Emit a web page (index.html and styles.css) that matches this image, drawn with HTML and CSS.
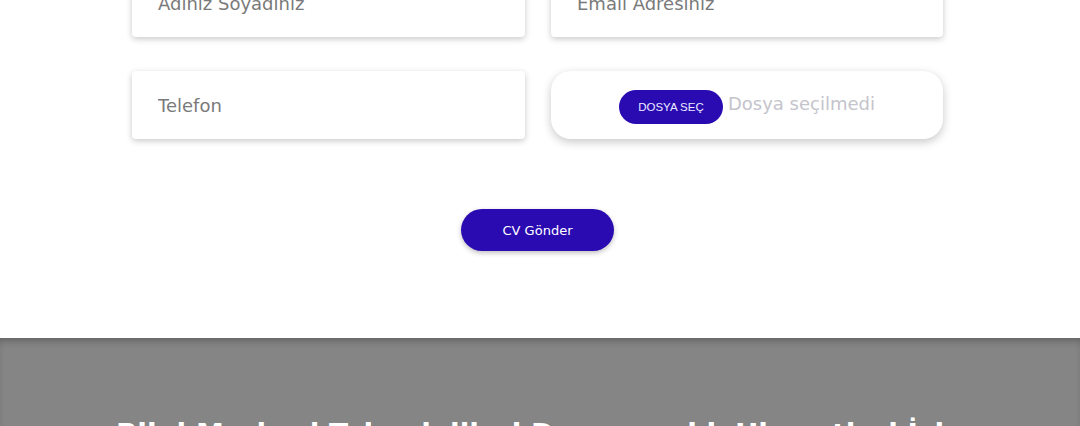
FILE: index.html
```html
<!DOCTYPE html>
<html lang="tr">
<head>
<meta charset="utf-8">
<title>CV Gönder</title>
<link rel="stylesheet" href="styles.css">
</head>
<body>
<section class="form-section">
  <form class="cv-form">
    <div class="grid">
      <input class="field" type="text" placeholder="Adiniz Soyadiniz">
      <input class="field" type="email" placeholder="Email Adresiniz">
      <input class="field" type="tel" placeholder="Telefon">
      <label class="file-field">
        <span class="file-btn">DOSYA SEÇ</span>
        <span class="file-name">Dosya seçilmedi</span>
      </label>
    </div>
    <div class="actions">
      <button type="button" class="submit">CV Gönder</button>
    </div>
  </form>
</section>
<section class="info-section">
  <h2 class="info-title">Bilgi Merkezi Teknolojileri Danışmanlık Hizmetleri İçin</h2>
</section>
</body>
</html>
```
FILE: styles.css
```css
* { box-sizing: border-box; }
html, body { margin: 0; padding: 0; background: #ffffff; overflow: hidden; }
body { font-family: "DejaVu Sans", "Noto Sans", sans-serif; }

.form-section {
  background: #ffffff;
  padding: 0 5px 87px 0;
}
.cv-form {
  width: 811px;
  margin: -31px auto 0;
}
.grid {
  display: grid;
  grid-template-columns: 393px 392px;
  column-gap: 26px;
  row-gap: 34px;
}
.field {
  height: 68px;
  border: none;
  border-radius: 4px;
  background: #fff;
  box-shadow: 0 2px 6px rgba(0,0,0,0.22);
  padding: 0 0 0 26px;
  font-family: "DejaVu Sans", sans-serif;
  font-size: 18px;
  color: #777;
  outline: none;
}
.field::placeholder { color: #7a7a7a; }
.file-field {
  height: 68px;
  border-radius: 20px;
  background: #fff;
  box-shadow: 0 3px 10px rgba(0,0,0,0.22);
  display: flex;
  align-items: center;
  justify-content: center;
  gap: 5px;
}
.file-btn {
  width: 104px;
  height: 34px;
  border-radius: 17px;
  background: #2a0bb1;
  color: #ecebff;
  font-family: "Liberation Sans", Arial, sans-serif;
  font-size: 11.5px;
  display: flex;
  align-items: center;
  justify-content: center;
  margin-top: 4px;
}
.file-name {
  font-size: 18px;
  color: #c4c4cc;
  margin-bottom: 3px;
}
.actions {
  display: flex;
  justify-content: center;
  margin-top: 70px;
}
.submit {
  width: 153px;
  height: 42px;
  border: none;
  border-radius: 21px;
  background: #2a0bb1;
  color: #fff;
  font-family: "DejaVu Sans", sans-serif;
  font-size: 13px;
  box-shadow: 0 2px 5px rgba(0,0,0,0.25);
}
.info-section {
  background: #858585;
  box-shadow: inset 0 6px 8px -4px rgba(0,0,0,0.3);
  height: 120px;
  padding-top: 80px;
  text-align: center;
}
.info-title {
  margin: 0;
  color: #fff;
  font-family: "DejaVu Sans", sans-serif;
  font-weight: bold;
  font-size: 28px;
  line-height: 1.2;
}
```
